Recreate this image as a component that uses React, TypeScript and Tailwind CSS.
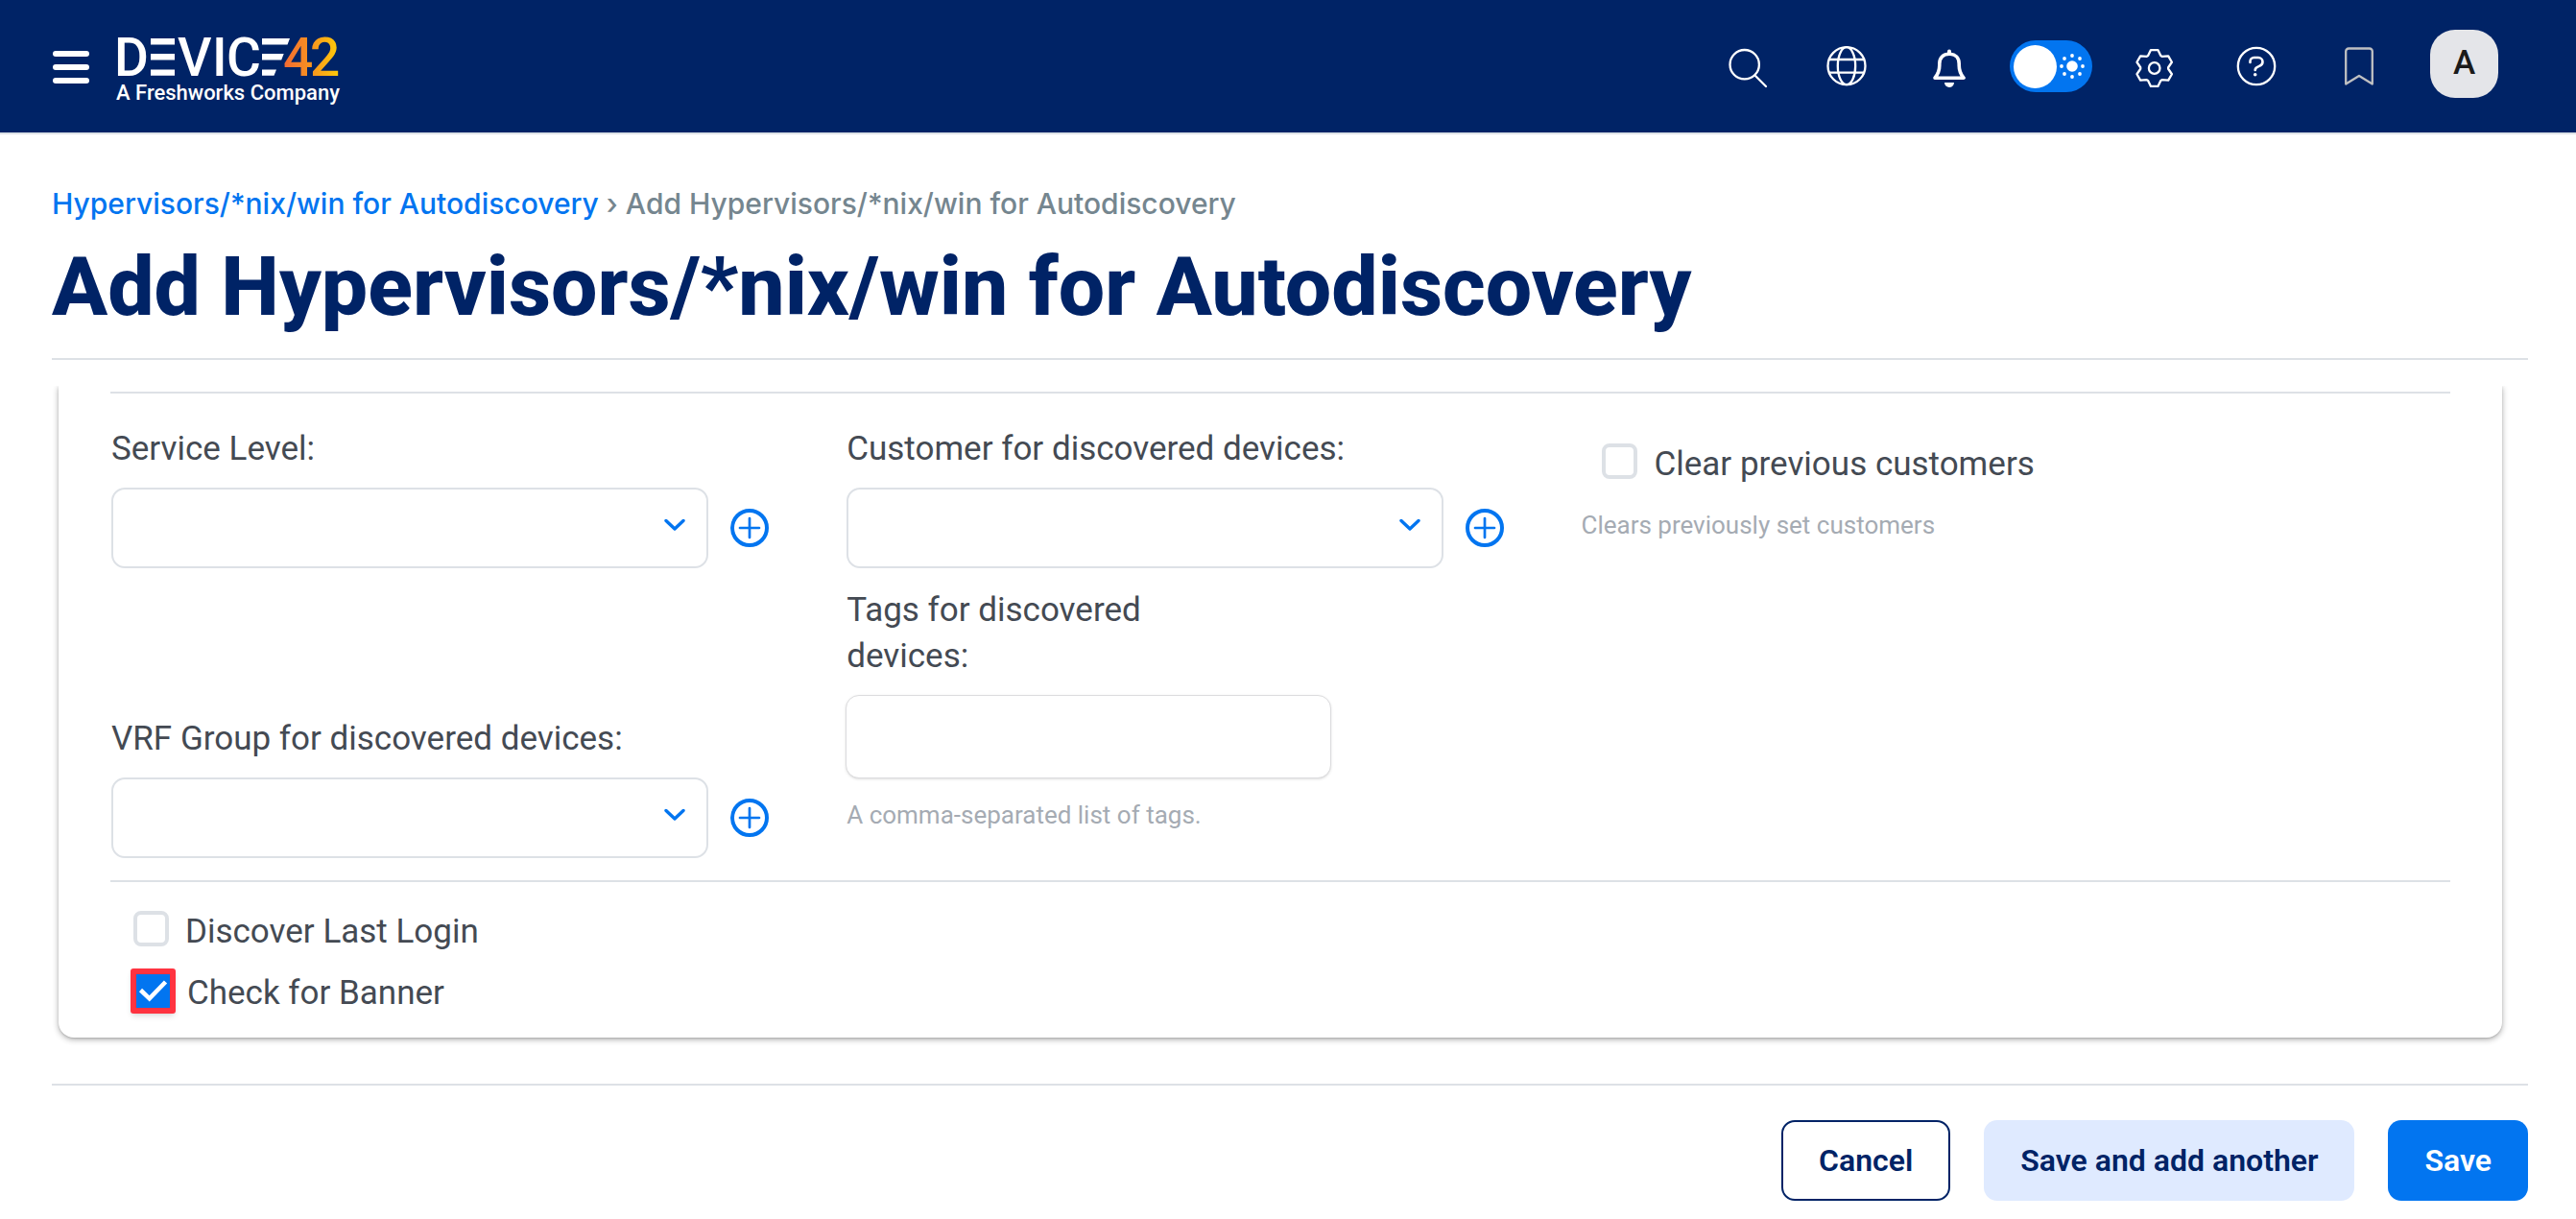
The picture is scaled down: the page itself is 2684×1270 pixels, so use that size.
import type { ReactNode } from "react";

const GEAR_POINTS = Array.from({ length: 6 }, (_, i) => {
  const a = (i * Math.PI) / 3;
  const tooth: [number, number][] = [
    [-6.6, -12.9],
    [-3.7, -18.9],
    [3.7, -18.9],
    [6.6, -12.9],
  ];
  return tooth
    .map(([x, y]) => {
      const px = 24.7 + x * Math.cos(a) - y * Math.sin(a);
      const py = 26 + x * Math.sin(a) + y * Math.cos(a);
      return `${px.toFixed(2)},${py.toFixed(2)}`;
    })
    .join(" ");
}).join(" ");

const SUN_DOTS: [number, number][] = [
  [0, -11],
  [8, -8],
  [11, 0],
  [8, 8],
  [0, 11],
  [-8, 8],
  [-11, 0],
  [-8, -8],
];

function Icon({ children }: { children: ReactNode }) {
  return (
    <svg viewBox="0 0 48 48" className="size-12" fill="none" stroke="currentColor" strokeWidth="2.3" aria-hidden="true">
      {children}
    </svg>
  );
}

function HeaderButton({ label, children }: { label: string; children: ReactNode }) {
  return (
    <button type="button" aria-label={label} className="flex w-[107px] items-center justify-center">
      <Icon>{children}</Icon>
    </button>
  );
}

function Logo() {
  return (
    <a href="#home" aria-label="Device42, a Freshworks company" className="flex flex-col gap-[3px] pt-2 text-white">
      <svg viewBox="0 0 234 45" className="h-[45px] w-[234px] overflow-visible" fill="#fff" aria-hidden="true">
        <defs>
          <linearGradient id="sunrise" gradientUnits="userSpaceOnUse" x1="176" y1="0" x2="232" y2="0">
            <stop offset="0" stopColor="#f36c32" />
            <stop offset="0.5" stopColor="#f8951f" />
            <stop offset="1" stopColor="#ffcb08" />
          </linearGradient>
        </defs>
        <g fontFamily="Roboto, sans-serif" fontSize="55" fontWeight="500">
          <text x="-2" y="42">D</text>
          <text x="64" y="42">V</text>
          <text x="100" y="42">I</text>
          <text x="115" y="42">C</text>
          <text x="174" y="42" fill="url(#sunrise)">4</text>
          <text x="202" y="42" fill="url(#sunrise)">2</text>
        </g>
        <path d="M36 3h25v6.4h-25zM36 19h25v6.4h-25zM36 35.4h25v6.4h-25z" />
        <path d="M152 3h29l-2.5 6.4h-26.5zM152 19h22.7l-2.5 6.4h-20.2zM152 35.4h15l-2.5 6.4h-12.5z" />
      </svg>
      <span className="text-[22px] leading-6 font-medium">A Freshworks Company</span>
    </a>
  );
}

function Header() {
  return (
    <header className="flex h-[140px] items-center border-b-2 border-[#dde1e6] bg-[#002366] pr-[81px] pl-[55px] text-white">
      <button type="button" aria-label="Menu" className="mr-7 flex w-[38px] flex-col gap-2 pt-0.5">
        <span className="h-1.5 rounded-full bg-white" />
        <span className="h-1.5 rounded-full bg-white" />
        <span className="h-1.5 rounded-full bg-white" />
      </button>
      <Logo />
      <nav aria-label="Tools" className="ml-auto flex items-center">
        <button type="button" aria-label="Search" className="flex w-[98px] items-center justify-center">
          <Icon>
            <circle cx="21.7" cy="22.2" r="15.2" />
            <path d="M32.5 33.5 44 45" strokeLinecap="round" />
          </Icon>
        </button>
        <HeaderButton label="Language">
          <circle cx="25" cy="23.7" r="19.5" />
          <ellipse cx="25" cy="23.7" rx="9.2" ry="19.5" />
          <path d="M7 17h36M7 30.6h36" />
        </HeaderButton>
        <HeaderButton label="Notifications">
          <path
            d="M10 36.2C12.7 33 14.8 28.5 14.8 23v-1.5C14.8 15 18.6 11.2 25 11.2S35.2 15 35.2 21.5V23c0 5.5 2.1 10 4.8 13.2z"
            strokeWidth="3.6"
            strokeLinejoin="round"
          />
          <path d="M25 8.500v2" strokeWidth="4" strokeLinecap="round" />
          <path d="M20 41h10a5 5 0 0 1-10 0z" fill="currentColor" stroke="none" />
        </HeaderButton>
        <div className="flex w-[107px] justify-center">
          <button
            type="button"
            role="switch"
            aria-checked="true"
            aria-label="Light theme"
            className="flex h-[54px] w-[86px] items-center gap-[3px] rounded-full bg-[#0275f0] pl-1"
          >
            <span className="size-[45px] rounded-full bg-white" />
            <svg viewBox="0 0 26 26" className="size-[26px]" fill="#fff" aria-hidden="true">
              <circle cx="13" cy="13" r="5.8" />
              {SUN_DOTS.map(([x, y]) => (
                <circle key={`${x},${y}`} cx={13 + x} cy={13 + y} r="1.9" />
              ))}
            </svg>
          </button>
        </div>
        <HeaderButton label="Settings">
          <polygon points={GEAR_POINTS} strokeLinejoin="round" />
          <circle cx="24.7" cy="26" r="5.8" />
        </HeaderButton>
        <HeaderButton label="Help">
          <circle cx="24" cy="24" r="19.2" />
          <path
            d="M17.500 20v-1a4 4 0 0 1 4-4h4.500a4.500 4.500 0 0 1 4.500 4.500c0 2.500-1.500 3.700-4 4.600-2.500.9-3.800 1.600-3.800 3.900"
            strokeWidth="2.6"
            strokeLinecap="round"
          />
          <circle cx="22.7" cy="32.7" r="1.8" fill="currentColor" stroke="none" />
        </HeaderButton>
        <HeaderButton label="Bookmarks">
          <path
            d="M10.200 42.500V8.500a3 3 0 0 1 3-3h21.600a3 3 0 0 1 3 3v34L24 34z"
            stroke="#bfc0c2"
            strokeLinejoin="round"
          />
        </HeaderButton>
        <button
          type="button"
          aria-label="Account"
          className="mb-1.5 ml-[21px] flex size-[71px] items-center justify-center rounded-[26px] bg-[#e4e5e9] text-[35px] font-medium text-[#1a1a1a]"
        >
          A
        </button>
      </nav>
    </header>
  );
}

function SelectField({ id, label, className = "" }: { id: string; label: string; className?: string }) {
  return (
    <div className={`pl-px ${className}`}>
      <label htmlFor={id} className="block">
        {label}
      </label>
      <div className="mt-4 flex items-center gap-[23px] pr-20">
        <div className="grid flex-1">
          <select
            id={id}
            className="col-start-1 row-start-1 h-[84px] w-full appearance-none rounded-[14px] border-2 border-[#dde1e6] bg-white px-5"
          >
            <option value="" />
          </select>
          <svg
            viewBox="0 0 22 14"
            className="pointer-events-none col-start-1 row-start-1 mr-6 mb-1.5 h-3.5 w-[22px] self-center justify-self-end"
            fill="none"
            stroke="#0275f0"
            strokeWidth="3.4"
            strokeLinecap="round"
            strokeLinejoin="round"
            aria-hidden="true"
          >
            <path d="M2 2.500 11 11 20 2.500" />
          </svg>
        </div>
        <button type="button" aria-label={`Add ${label.replace(":", "")}`}>
          <svg viewBox="0 0 40 40" className="size-10" fill="none" stroke="#0275f0" aria-hidden="true">
            <circle cx="20" cy="20" r="18" strokeWidth="4" />
            <path d="M20 10v20M10 20h20" strokeWidth="2.7" strokeLinecap="round" />
          </svg>
        </button>
      </div>
    </div>
  );
}

function CheckField({ label, className = "" }: { label: string; className?: string }) {
  return (
    <label className={`flex w-fit items-start gap-[17px] ${className}`}>
      <input
        type="checkbox"
        className="mt-0.5 size-[37px] appearance-none rounded-lg border-4 border-[#dde1e6] bg-white checked:bg-[#0275f0]"
      />
      {label}
    </label>
  );
}

function HighlightedCheckField({ label }: { label: string }) {
  return (
    <label className="mt-3.5 flex w-fit items-end gap-3 pl-[21px]">
      <span className="mb-[3px] grid size-[47px]">
        <input
          type="checkbox"
          defaultChecked
          className="peer col-start-1 row-start-1 size-[47px] appearance-none rounded-[3px] border-6 border-[#ff3340] bg-white shadow-md checked:bg-[#0275f0]"
        />
        <svg
          viewBox="0 0 47 47"
          className="pointer-events-none invisible col-start-1 row-start-1 size-[47px] peer-checked:visible"
          fill="none"
          stroke="#fff"
          strokeWidth="4.5"
          aria-hidden="true"
        >
          <path d="M10.500 22.500 19.700 31.300 36.500 14" />
        </svg>
      </span>
      {label}
    </label>
  );
}

function DiscoveryForm() {
  return (
    <div className="overflow-hidden pr-[27px] pb-12 pl-[7px]">
      <div className="rounded-b-2xl bg-white px-[54px] pt-1.5 pb-[22px] text-[35px] leading-[48px] font-[450] text-[#444a53] shadow-[0_2px_6px_rgba(0,0,0,0.32),0_1px_2px_rgba(0,0,0,0.12)]">
        <hr className="border-t-2 border-[#dde1e6]" />
        <div className="grid grid-cols-[11fr_11fr_13fr] gap-y-5 pt-[34px]">
          <SelectField id="service-level" label="Service Level:" />
          <SelectField id="customer" label="Customer for discovered devices:" />
          <div className="pt-4">
            <CheckField label="Clear previous customers" className="pl-[22px]" />
            <p className="mt-[21px] text-[26px] leading-9 font-normal text-[#a5abb3]">Clears previously set customers</p>
          </div>
          <SelectField id="vrf-group" label="VRF Group for discovered devices:" className="self-end" />
          <div className="pb-[27px]">
            <label htmlFor="tags" className="block w-1/2 pr-14 pl-px">
              Tags for discovered devices:
            </label>
            <input
              id="tags"
              type="text"
              className="mt-4 block h-[87px] w-[66%] rounded-[14px] border border-[#dcdcde] bg-white px-5 shadow-sm"
            />
            <p className="mt-5 pl-px text-[26px] leading-9 font-normal text-[#a5abb3]">
              A comma-separated list of tags.
            </p>
          </div>
        </div>
        <hr className="mt-[23px] border-t-2 border-[#dde1e6]" />
        <div className="pt-7">
          <CheckField label="Discover Last Login" className="pl-6" />
          <HighlightedCheckField label="Check for Banner" />
        </div>
      </div>
    </div>
  );
}

export default function App() {
  return (
    <div className="bg-white font-[Roboto,sans-serif]">
      <Header />
      <main className="pr-[50px] pl-[54px]">
        <nav aria-label="Breadcrumb" className="pt-[52px] font-[Inter,sans-serif] text-[30px] leading-10 font-medium text-[#75868f]">
          <a href="#autodiscovery" className="text-[#0275f0]">
            Hypervisors/*nix/win for Autodiscovery
          </a>{" "}
          › Add Hypervisors/*nix/win for Autodiscovery
        </nav>
        <h1 className="mt-[17px] text-[86px] leading-[100px] font-extrabold text-[#002366]">
          Add Hypervisors/*nix/win for Autodiscovery
        </h1>
        <hr className="mt-6 mb-[27px] border-t-2 border-[#dde1e6]" />
        <DiscoveryForm />
        <div className="flex justify-end gap-[35px] border-t-2 border-[#dde1e6] pt-9 pb-5 text-[32px] font-semibold">
          <button type="button" className="h-[84px] rounded-[14px] border-2 border-[#002366] bg-white px-[37px] text-[#002366]">
            Cancel
          </button>
          <button type="button" className="h-[84px] rounded-[14px] bg-[#dfeaff] px-[38px] text-[#002366]">
            Save and add another
          </button>
          <button type="submit" className="h-[84px] rounded-[14px] bg-[#0275f0] px-[38px] text-white">
            Save
          </button>
        </div>
      </main>
    </div>
  );
}
